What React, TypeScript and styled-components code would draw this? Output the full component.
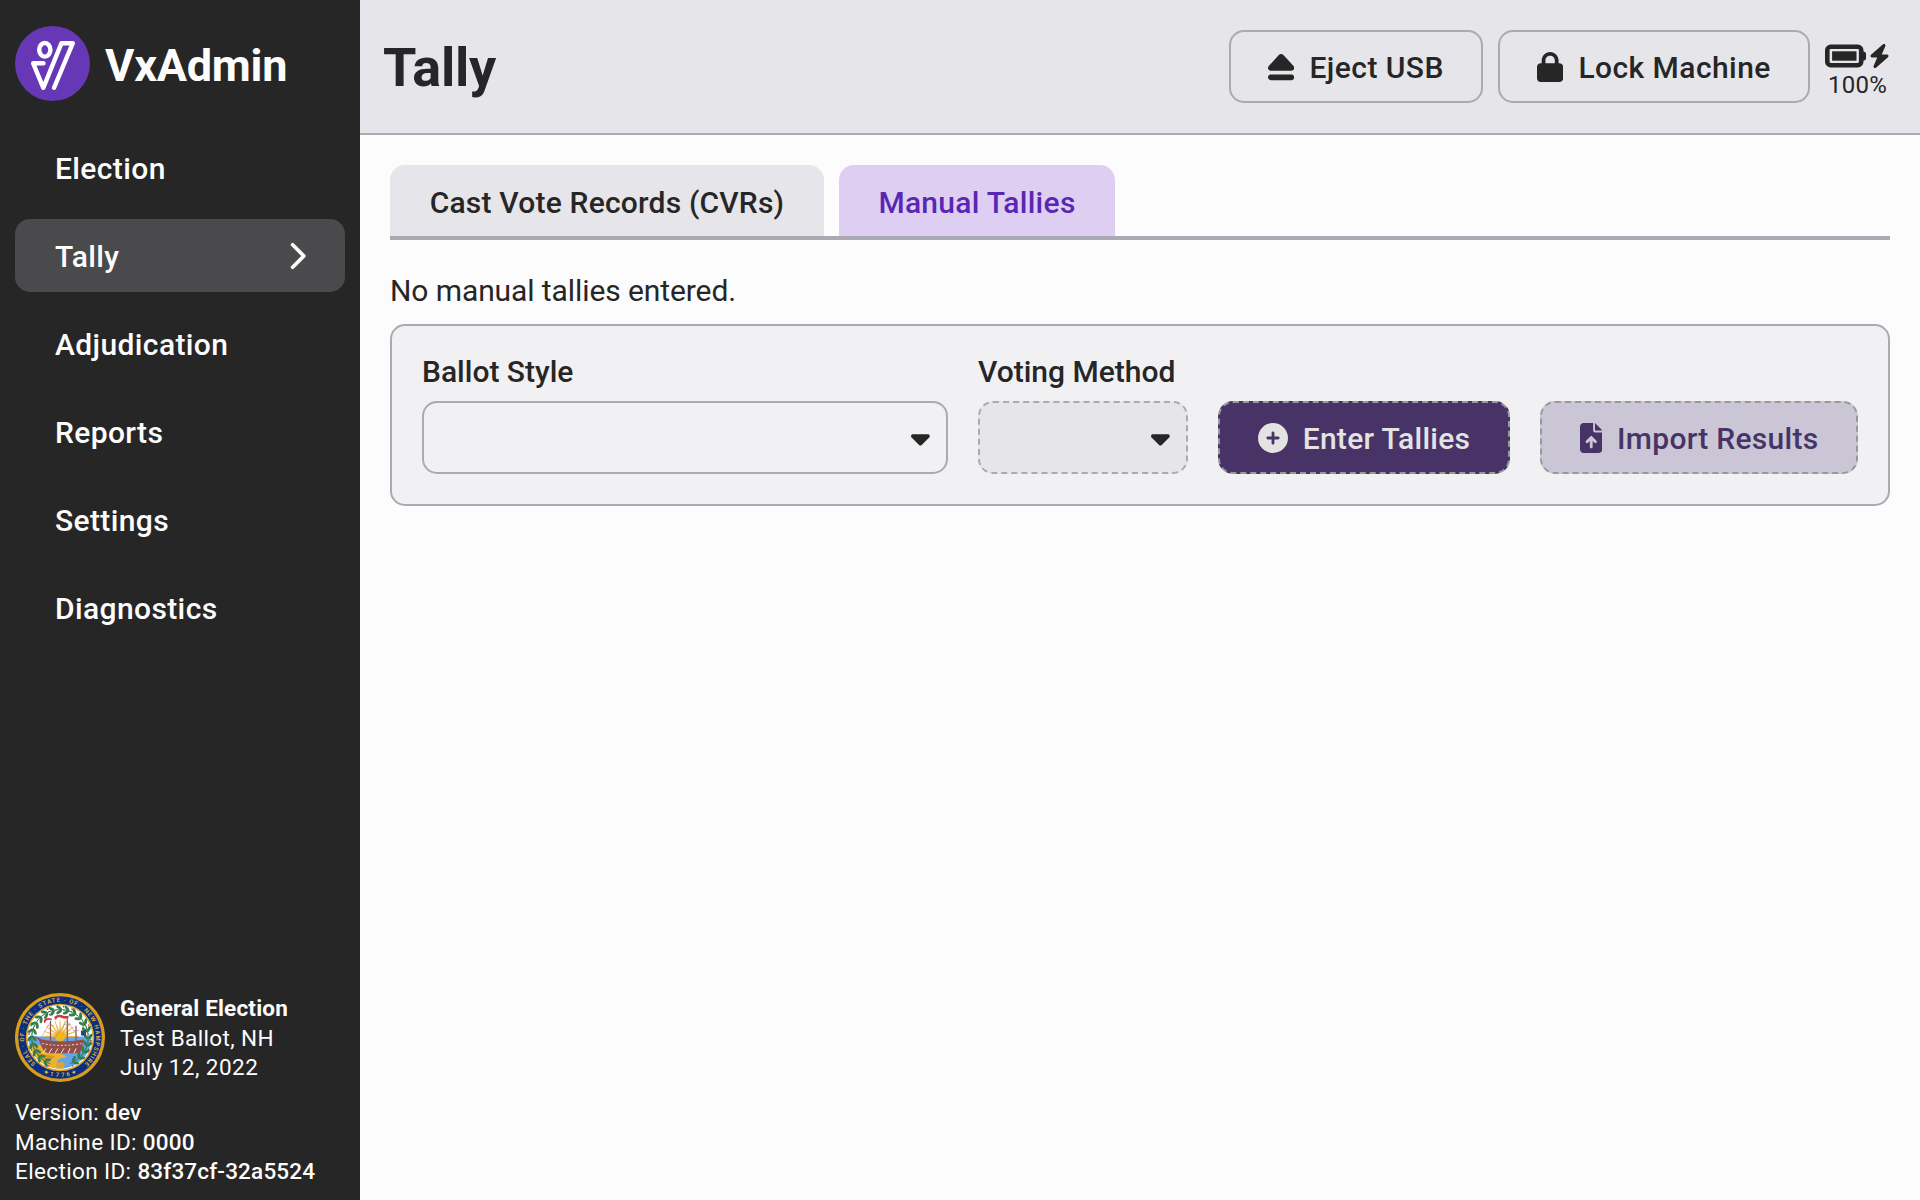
import React from 'react';
import styled, { createGlobalStyle, css } from 'styled-components';
import {
  FaBolt,
  FaCaretDown,
  FaChevronRight,
  FaCirclePlus,
  FaEject,
  FaFileArrowUp,
  FaLock,
} from 'react-icons/fa6';

const GlobalStyle = createGlobalStyle`
  *, *::before, *::after { box-sizing: border-box; }
  body {
    margin: 0;
    background: #fcfcfc;
    color: #262626;
    font-family: Roboto, "Liberation Sans", sans-serif;
    font-size: 30px;
    line-height: 1.2;
  }
`;

const Screen = styled.div`
  display: flex;
  width: 100%;
  height: 100vh;
  overflow: hidden;
`;

const Sidebar = styled.aside`
  display: flex;
  flex-direction: column;
  flex: 0 0 360px;
  padding: 26px 15px 14px;
  background: #262626;
  color: #fcfcfc;
`;

const Brand = styled.div`
  display: flex;
  align-items: center;
  gap: 15px;
  height: 75px;
  margin-bottom: 30px;
  font-size: 45px;
  font-weight: 700;
  letter-spacing: -0.25px;
  svg { flex: none; }
`;

const BrandName = styled.span`
  padding-top: 4px;
`;

const NavList = styled.nav`
  display: flex;
  flex-direction: column;
  gap: 15px;
`;

const NavItem = styled.a<{ $active?: boolean }>`
  display: flex;
  align-items: center;
  justify-content: space-between;
  height: 73px;
  padding: 0 39px 0 40px;
  border-radius: 15px;
  font-weight: 500;
  letter-spacing: 0.38px;
  background: ${(p) => (p.$active ? '#4a4a4c' : 'transparent')};
`;

const NavLabel = styled.span`
  padding-top: 2px;
`;

const Icon = styled.span<{ $width: number; $size?: number }>`
  display: flex;
  flex: none;
  svg {
    width: ${(p) => p.$width}px;
    height: ${(p) => p.$size ?? 30}px;
  }
`;

const SidebarFooter = styled.footer`
  margin-top: auto;
  font-size: 22.5px;
  line-height: 29.25px;
  letter-spacing: 0.37px;
`;

const ElectionInfo = styled.div`
  display: flex;
  align-items: center;
  gap: 15px;
  margin-bottom: 16px;
  svg { flex: none; }
`;

const ElectionText = styled.div`
  padding-top: 1px;
`;

const ElectionTitle = styled.div`
  font-weight: 700;
  letter-spacing: 0.18px;
`;

const ElectionDate = styled.div`
  letter-spacing: 0.45px;
`;

const Value = styled.span`
  font-weight: 500;
  letter-spacing: 0.17px;
`;

const Main = styled.main`
  display: flex;
  flex: 1;
  flex-direction: column;
  min-width: 0;
`;

const Header = styled.header`
  display: flex;
  align-items: center;
  gap: 15px;
  height: 135px;
  padding: 0 30px 0 23px;
  background: #e6e5ea;
  border-bottom: 2px solid #aba9b1;
`;

const Title = styled.h1`
  flex: 1;
  margin: 0;
  padding-top: 4px;
  font-size: 54px;
  font-weight: 700;
  letter-spacing: -0.25px;
`;

const filled = css`
  border: 2px dashed #999999;
  background: #473366;
  color: #e3e3e3;
`;
const tinted = css`
  border: 2px dashed #999999;
  background: #cbc6d6;
  color: #473366;
`;
const neutral = css`
  border: 2px solid #aba9b1;
  background: transparent;
  color: #262626;
`;

const Button = styled.button<{ $kind?: 'filled' | 'tinted'; $width: number }>`
  display: flex;
  align-items: center;
  justify-content: center;
  gap: 15px;
  flex: none;
  width: ${(p) => p.$width}px;
  height: 73px;
  padding: 0;
  border-radius: 15px;
  font: inherit;
  font-weight: 500;
  letter-spacing: ${(p) => (p.$kind ? 0.28 : 0.44)}px;
  white-space: nowrap;
  ${(p) => (p.$kind === 'filled' ? filled : p.$kind === 'tinted' ? tinted : neutral)}
`;

const ButtonLabel = styled.span`
  padding-top: 2px;
`;

const Battery = styled.div`
  display: flex;
  flex-direction: column;
  align-items: center;
  width: 65px;
  padding-top: 6px;
  font-size: 24px;
  line-height: 27px;
  letter-spacing: 0.2px;
`;

const BatteryIcons = styled.div`
  display: flex;
  align-items: center;
  gap: 3px;
  height: 32px;
`;

const Content = styled.section`
  padding: 30px;
`;

const Tabs = styled.div`
  display: flex;
  gap: 15px;
  height: 75px;
  border-bottom: 4px solid #aba9b1;
`;

const Tab = styled.div<{ $active?: boolean; $width: number }>`
  display: flex;
  align-items: center;
  justify-content: center;
  width: ${(p) => p.$width}px;
  padding-top: 4px;
  border-radius: 15px 15px 0 0;
  font-weight: 500;
  letter-spacing: ${(p) => (p.$active ? 0.28 : 0.2)}px;
  background: ${(p) => (p.$active ? '#decef2' : '#e6e5ea')};
  color: ${(p) => (p.$active ? '#5a27b4' : '#262626')};
`;

const Message = styled.p`
  margin: 32px 0 0;
  line-height: 37px;
  letter-spacing: -0.09px;
`;

const Card = styled.div`
  display: flex;
  align-items: flex-end;
  gap: 30px;
  height: 182px;
  margin-top: 15px;
  padding: 0 30px 30px;
  border: 2px solid #aba9b1;
  border-radius: 15px;
  background: #f1f1f4;
`;

const Field = styled.div<{ $width?: number }>`
  display: flex;
  flex-direction: column;
  gap: 11px;
  ${(p) => (p.$width ? `flex: 0 0 ${p.$width}px;` : 'flex: 1;')}
  font-weight: 500;
`;

const Select = styled.div<{ $disabled?: boolean }>`
  display: flex;
  align-items: center;
  justify-content: flex-end;
  height: 73px;
  padding-right: 16px;
  border: 2px ${(p) => (p.$disabled ? 'dashed' : 'solid')} #aba9b1;
  border-radius: 15px;
  background: ${(p) => (p.$disabled ? '#e6e5ea' : 'transparent')};
`;

const SealText = styled.text`
  font-family: Roboto, sans-serif;
  font-size: 6px;
  font-weight: 500;
  letter-spacing: 0;
  fill: #e8b93c;
`;

function Logo() {
  return (
    <svg width="75" height="75" viewBox="0 0 75 75" fill="none">
      <circle cx="37.5" cy="37.5" r="37.5" fill="#6638b6" />
      <g stroke="#fff" strokeWidth="4.4" strokeLinecap="round" strokeLinejoin="round">
        <ellipse cx="29.8" cy="23.8" rx="5.6" ry="6.8" />
        <path d="M28.5 37.3H18.2L28.3 61.8L46.5 17.2H57.8L39 61.8" />
      </g>
    </svg>
  );
}

function FullBattery() {
  return (
    <svg viewBox="0 0 41 24" fill="currentColor">
      <rect x="2.3" y="2.8" width="33.9" height="18.4" rx="3.4" fill="none" stroke="currentColor" strokeWidth="4.6" />
      <path d="M38 7.4Q41 7.4 41 10V14Q41 16.6 38 16.6Z" />
      <rect x="7.1" y="7.3" width="24.4" height="9.4" />
    </svg>
  );
}

const leafAngles = Array.from({ length: 21 }, (_, i) => 210 + i * 15);
const rayAngles = Array.from({ length: 11 }, (_, i) => 180 + i * 18);

function Seal() {
  return (
    <svg width="90" height="89" viewBox="0 0 90 90" preserveAspectRatio="none">
      <defs>
        <clipPath id="scene"><circle cx="45" cy="45" r="31.5" /></clipPath>
        <path id="ring-top" d="M22.9 73.3A35.9 35.9 0 1 1 67.1 73.3" />
        <path id="ring-bottom" d="M25 79.6A40 40 0 0 0 65 79.6" />
      </defs>
      <circle cx="45" cy="45" r="45" fill="#d99c1c" />
      <circle cx="45" cy="45" r="41.8" fill="#0b2f80" />
      <circle cx="45" cy="45" r="34.2" fill="#dca62c" />
      <circle cx="45" cy="45" r="32.6" fill="#fff" />
      <g clipPath="url(#scene)">
        <path d="M12 44H78V78H12Z" fill="#63a4ef" />
        <path d="M12 53Q32 50 40 60Q49 62 52 65Q39 67 43 71L52 78H12Z" fill="#edb22f" />
        <path d="M22 61L40 64L35 68L24 66Z" fill="#d89720" />
        {rayAngles.map((a) => (
          <path key={a} d="M45 43L62 43.8V44.4L45 45.2Z" fill="#e9b540" transform={`rotate(${a} 45 44)`} />
        ))}
        <circle cx="45" cy="44" r="5" fill="#f2b51d" />
      </g>
      {leafAngles.map((a, i) => {
        const r = (a * Math.PI) / 180;
        const x = 45 + Math.sin(r) * 28;
        const y = 45 - Math.cos(r) * 28;
        return (
          <g key={a} transform={`translate(${x} ${y}) rotate(${a})`}>
            <path d="M-5 0H5" stroke="#31794a" strokeWidth="0.8" />
            <ellipse cx="-1" cy="-2.2" rx="3.3" ry="1.5" fill="#2c8047" transform="rotate(38 -1 -2)" />
            <ellipse cx="-1" cy="2.2" rx="3.3" ry="1.5" fill="#347f4b" transform="rotate(-38 -1 2)" />
            <circle cx={i % 3 ? 3.4 : -4} cy={i % 2 ? 3 : -3} r="0.8" fill="#cc2947" />
          </g>
        );
      })}
      <path d="M35.5 28V49M52.3 26V50M61 33V48" stroke="#8a514b" strokeWidth="1.2" />
      <path d="M32 33H39M49 32H56M58 38H64M35 30L25 47M52 28L38 48M52 28L65 47" stroke="#a8847d" strokeWidth="0.5" />
      <path d="M29 27Q32 24 37 26V27.2Q33 26.4 31 28L30 30.5L28.8 29.5ZM39.5 24Q43 21 47 22.4Q51 24 53.5 23V25.8Q47 26.4 45 24.6Q42 24 41 27L39.5 26Z" fill="#cc3949" />
      <path d="M19 43L27 47Q45 51 69 47L66 58Q64 62 58 61H34Q29 60 27 55L24 48Z" fill="#914f48" />
      <path d="M27 51Q46 55 67 51" fill="none" stroke="#e3c3b4" strokeWidth="1.1" strokeDasharray="2 1.8" />
      <path d="M31 56L28 61M37 56L34 61M43 56L40 61M49 56L46 61M55 56L53 61M61 56L59 61" stroke="#f2e6dd" strokeWidth="1" />
      <path d="M66 38H71V43H66Z" fill="#2d417f" />
      <path d="M41 72L46 69L50 72L48 76H42Z" fill="#dca62c" />
      <SealText>
        <textPath href="#ring-top" startOffset="50%" textAnchor="middle" textLength="172">
          SEAL · OF · THE · STATE · OF · NEW HAMPSHIRE
        </textPath>
      </SealText>
      <SealText>
        <textPath href="#ring-bottom" startOffset="50%" textAnchor="middle" textLength="35">
          ★1776★
        </textPath>
      </SealText>
    </svg>
  );
}

const navItems = ['Election', 'Tally', 'Adjudication', 'Reports', 'Settings', 'Diagnostics'];

export default function App() {
  return (
    <>
      <GlobalStyle />
      <Screen>
        <Sidebar>
          <Brand>
            <Logo />
            <BrandName>VxAdmin</BrandName>
          </Brand>
          <NavList>
            {navItems.map((item) => (
              <NavItem key={item} $active={item === 'Tally'}>
                <NavLabel>{item}</NavLabel>
                {item === 'Tally' && <Icon $width={18.75}><FaChevronRight /></Icon>}
              </NavItem>
            ))}
          </NavList>
          <SidebarFooter>
            <ElectionInfo>
              <Seal />
              <ElectionText>
                <ElectionTitle>General Election</ElectionTitle>
                <div>Test Ballot, NH</div>
                <ElectionDate>July 12, 2022</ElectionDate>
              </ElectionText>
            </ElectionInfo>
            <div>Version: <Value>dev</Value></div>
            <div>Machine ID: <Value>0000</Value></div>
            <div>Election ID: <Value>83f37cf-32a5524</Value></div>
          </SidebarFooter>
        </Sidebar>
        <Main>
          <Header>
            <Title>Tally</Title>
            <Button $width={254}>
              <Icon $width={26.25}><FaEject /></Icon>
              <ButtonLabel>Eject USB</ButtonLabel>
            </Button>
            <Button $width={312}>
              <Icon $width={26.25}><FaLock /></Icon>
              <ButtonLabel>Lock Machine</ButtonLabel>
            </Button>
            <Battery>
              <BatteryIcons>
                <Icon $width={41} $size={24}><FullBattery /></Icon>
                <Icon $width={21} $size={24}><FaBolt /></Icon>
              </BatteryIcons>
              100%
            </Battery>
          </Header>
          <Content>
            <Tabs>
              <Tab $width={434}>Cast Vote Records (CVRs)</Tab>
              <Tab $width={276} $active>Manual Tallies</Tab>
            </Tabs>
            <Message>No manual tallies entered.</Message>
            <Card>
              <Field>
                Ballot Style
                <Select><Icon $width={18.75}><FaCaretDown /></Icon></Select>
              </Field>
              <Field $width={210}>
                Voting Method
                <Select $disabled><Icon $width={18.75}><FaCaretDown /></Icon></Select>
              </Field>
              <Button $kind="filled" $width={292} disabled>
                <Icon $width={30}><FaCirclePlus /></Icon>
                <ButtonLabel>Enter Tallies</ButtonLabel>
              </Button>
              <Button $kind="tinted" $width={318} disabled>
                <Icon $width={22.5}><FaFileArrowUp /></Icon>
                <ButtonLabel>Import Results</ButtonLabel>
              </Button>
            </Card>
          </Content>
        </Main>
      </Screen>
    </>
  );
}
